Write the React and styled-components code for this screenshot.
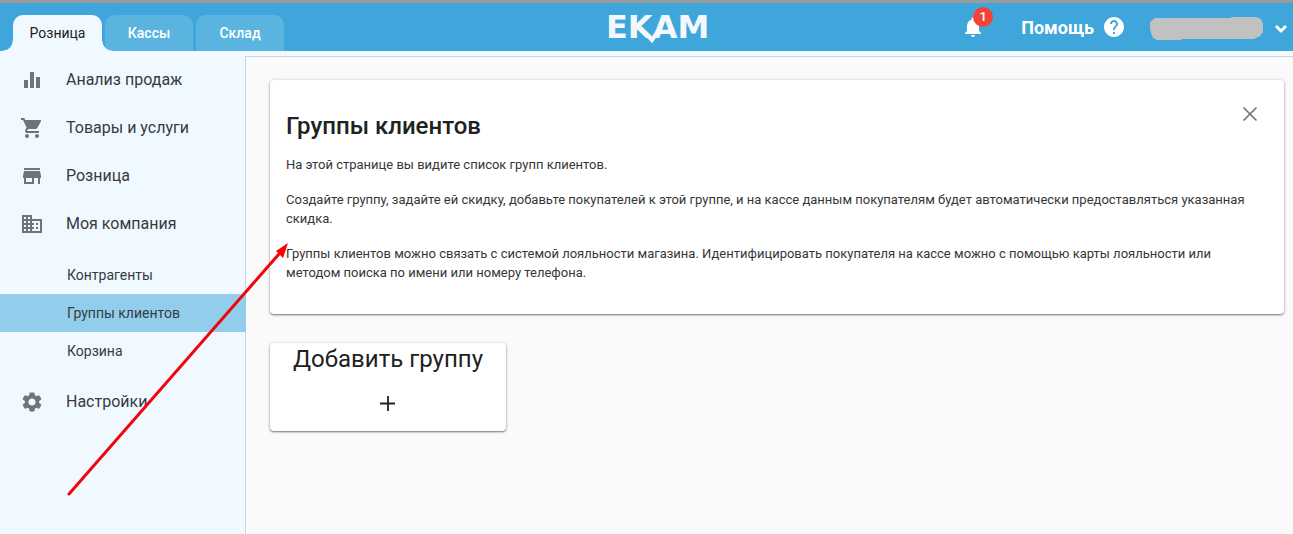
import React from "react";
import styled, { createGlobalStyle, css } from "styled-components";
import {
  MdEqualizer,
  MdShoppingCart,
  MdStore,
  MdDomain,
  MdSettings,
  MdNotifications,
  MdHelp,
} from "react-icons/md";

const GlobalStyle = createGlobalStyle`
  * {
    box-sizing: border-box;
  }

  body {
    margin: 0;
    background: #f0f9ff;
    color: #212121;
    font-family: Roboto, "Liberation Sans", sans-serif;
  }

  button {
    font-family: inherit;
    border: 0;
    padding: 0;
    background: none;
    cursor: pointer;
  }

  a {
    color: inherit;
    text-decoration: none;
  }
`;

const Page = styled.div`
  position: relative;
  display: flex;
  flex-direction: column;
  min-height: 100vh;
  overflow: hidden;
`;

const Header = styled.header`
  display: grid;
  grid-template-columns: 1fr auto 1fr;
  height: 51px;
  border-top: 3px solid #9b9b9b;
  background: #3ea6da;
  color: #fff;
`;

const Tabs = styled.nav`
  display: flex;
  align-items: flex-end;
  gap: 3px;
  padding-left: 13px;
`;

const Tab = styled.a`
  position: relative;
  width: 88px;
  height: 36px;
  border-radius: 10px 10px 0 0;
  background: #5ab4df;
  font-size: 14px;
  font-weight: 500;
  line-height: 36px;
  text-align: center;

  ${({ $active }) =>
    $active &&
    css`
      width: 89px;
      background: #f0f9ff;
      color: #212121;
      font-weight: 400;

      &::before,
      &::after {
        content: "";
        position: absolute;
        bottom: 0;
        width: 10px;
        height: 10px;
      }

      &::before {
        right: 100%;
        background: radial-gradient(circle at 0 0, transparent 9px, #f0f9ff 10px);
      }

      &::after {
        left: 100%;
        z-index: 1;
        background: radial-gradient(circle at 100% 0, transparent 9px, #f0f9ff 10px);
      }
    `}
`;

const Logo = styled.a`
  display: block;
  padding: 3px 0 0 24px;

  svg {
    display: block;
  }
`;

const Tools = styled.div`
  display: flex;
  align-items: center;
  justify-content: flex-end;
`;

const Bell = styled.button`
  position: relative;
  height: 24px;
  margin-right: 36px;
  color: #fff;
`;

const Badge = styled.span`
  position: absolute;
  top: -8px;
  right: -8px;
  width: 20px;
  height: 20px;
  border-radius: 50%;
  background: #f44336;
  font-size: 13px;
  font-weight: 500;
  line-height: 20px;
`;

const Help = styled.a`
  display: flex;
  align-items: center;
  gap: 8px;
  margin-right: 24px;
  font-size: 18px;
  font-weight: 700;
`;

const Account = styled.button`
  display: flex;
  align-items: center;
  gap: 5px;
  color: #fff;
`;

const Body = styled.div`
  display: flex;
  flex: 1;
`;

const Sidebar = styled.nav`
  flex: 0 0 245px;
  padding-top: 5px;
  color: #363b3f;
`;

const MenuItem = styled.a`
  display: flex;
  align-items: center;
  gap: 22px;
  height: 48px;
  padding-left: 20px;
  font-size: 16px;

  svg {
    color: #6e7478;
  }
`;

const MenuLabel = styled.span`
  padding-bottom: 2px;
`;

const SubMenu = styled.div`
  padding: 8px 0;
`;

const SubItem = styled.a`
  position: relative;
  display: block;
  margin-right: -1px;
  padding-left: 67px;
  font-size: 14px;
  line-height: 38px;
  background: ${({ $active }) => ($active ? "#92ceec" : "transparent")};
`;

const Main = styled.main`
  flex: 1;
  min-width: 0;
  margin-top: 5px;
  padding: 23px 9px 23px 24px;
  border-top: 1px solid #c9d6df;
  border-left: 1px solid #c9d6df;
  background: #fafafa;
`;

const Card = styled.section`
  border-radius: 4px;
  background: #fff;
  box-shadow: 0 1px 2px rgba(0, 0, 0, 0.5), 0 0 4px rgba(0, 0, 0, 0.1);
`;

const InfoCard = styled(Card)`
  margin-bottom: 29px;
  padding: 24px 24px 32px 16px;
`;

const CardHeader = styled.div`
  display: flex;
  align-items: flex-start;
  justify-content: space-between;
`;

const Title = styled.h1`
  margin: 6px 0 13px;
  font-size: 24px;
  font-weight: 500;
  line-height: 32px;
`;

const Paragraph = styled.p`
  margin: 0 0 16px;
  color: #363636;
  font-size: 13px;
  line-height: 19px;

  &:last-child {
    margin-bottom: 0;
  }
`;

const CloseButton = styled.button`
  height: 20px;
  color: #707070;
`;

const AddCard = styled(Card)`
  width: 236px;
`;

const AddButton = styled.button`
  display: flex;
  flex-direction: column;
  align-items: center;
  gap: 16px;
  width: 100%;
  height: 88px;
  color: #212121;
  font-size: 24px;
  line-height: 32px;
`;

const Arrow = styled.svg`
  position: absolute;
  top: 240px;
  left: 65px;
  pointer-events: none;
`;

const menu = [
  { label: "Анализ продаж", Icon: MdEqualizer },
  { label: "Товары и услуги", Icon: MdShoppingCart },
  { label: "Розница", Icon: MdStore },
  {
    label: "Моя компания",
    Icon: MdDomain,
    items: ["Контрагенты", "Группы клиентов", "Корзина"],
  },
  { label: "Настройки", Icon: MdSettings },
];

const App = () => (
  <Page>
    <GlobalStyle />
    <Header>
      <Tabs>
        <Tab href="#" $active>
          Розница
        </Tab>
        <Tab href="#">Кассы</Tab>
        <Tab href="#">Склад</Tab>
      </Tabs>
      <Logo href="#" aria-label="EKAM">
        <svg width="104" height="42" viewBox="0 0 104 42">
          <text
            x="-1"
            y="32"
            fill="#f4f8fa"
            fontFamily="DejaVu Sans, sans-serif"
            fontSize="32"
            fontWeight="700"
          >
            EKAM
          </text>
          <path d="M38 27l7 7 6-9" fill="none" stroke="#f4f8fa" strokeWidth="4" />
        </svg>
      </Logo>
      <Tools>
        <Bell aria-label="1">
          <MdNotifications size={24} />
          <Badge>1</Badge>
        </Bell>
        <Help href="#">
          Помощь
          <MdHelp size={24} />
        </Help>
        <Account aria-label="account">
          <svg width="114" height="26" viewBox="0 0 114 26">
            <path
              d="M5 4h74l4-1h23l5 2 2 5v8l-3 4-6 3H60l-1 0H32l-1 1H7l-4-2-2-5-1-5V8z"
              fill="#c1c1c1"
            />
          </svg>
          <svg width="24" height="24" viewBox="0 0 24 24">
            <path
              d="M7 11l5 5 5-5"
              fill="none"
              stroke="currentColor"
              strokeWidth="3"
            />
          </svg>
        </Account>
      </Tools>
    </Header>
    <Body>
      <Sidebar>
        {menu.map(({ label, Icon, items }) => (
          <React.Fragment key={label}>
            <MenuItem href="#">
              <Icon size={24} />
              <MenuLabel>{label}</MenuLabel>
            </MenuItem>
            {items && (
              <SubMenu>
                {items.map((item, i) => (
                  <SubItem href="#" key={item} $active={i === 1}>
                    {item}
                  </SubItem>
                ))}
              </SubMenu>
            )}
          </React.Fragment>
        ))}
      </Sidebar>
      <Main>
        <InfoCard>
          <CardHeader>
            <Title>Группы клиентов</Title>
            <CloseButton aria-label="close">
              <svg width="20" height="20" viewBox="0 0 20 20">
                <path
                  d="M3.5 3.5l13 13M16.5 3.5l-13 13"
                  stroke="currentColor"
                  strokeWidth="1.6"
                />
              </svg>
            </CloseButton>
          </CardHeader>
          <Paragraph>На этой странице вы видите список групп клиентов.</Paragraph>
          <Paragraph>
            Создайте группу, задайте ей скидку, добавьте покупателей к этой
            группе, и на кассе данным покупателям будет автоматически
            предоставляться указанная скидка.
          </Paragraph>
          <Paragraph>
            Группы клиентов можно связать с системой лояльности магазина.
            Идентифицировать покупателя на кассе можно с помощью карты
            лояльности или методом поиска по имени или номеру телефона.
          </Paragraph>
        </InfoCard>
        <AddCard>
          <AddButton>
            Добавить группу
            <svg width="24" height="24" viewBox="0 0 24 24">
              <path
                d="M12 5v15M4 12.5h15"
                stroke="currentColor"
                strokeWidth="1.8"
              />
            </svg>
          </AddButton>
        </AddCard>
      </Main>
    </Body>
    <Arrow width="230" height="260" viewBox="0 0 230 260">
      <path
        d="M4 254L214 14"
        stroke="#ee060c"
        strokeWidth="3"
        strokeLinecap="round"
      />
      <path d="M223 3l-5 15-7-7z" fill="#fb0007" />
    </Arrow>
  </Page>
);

export default App;
